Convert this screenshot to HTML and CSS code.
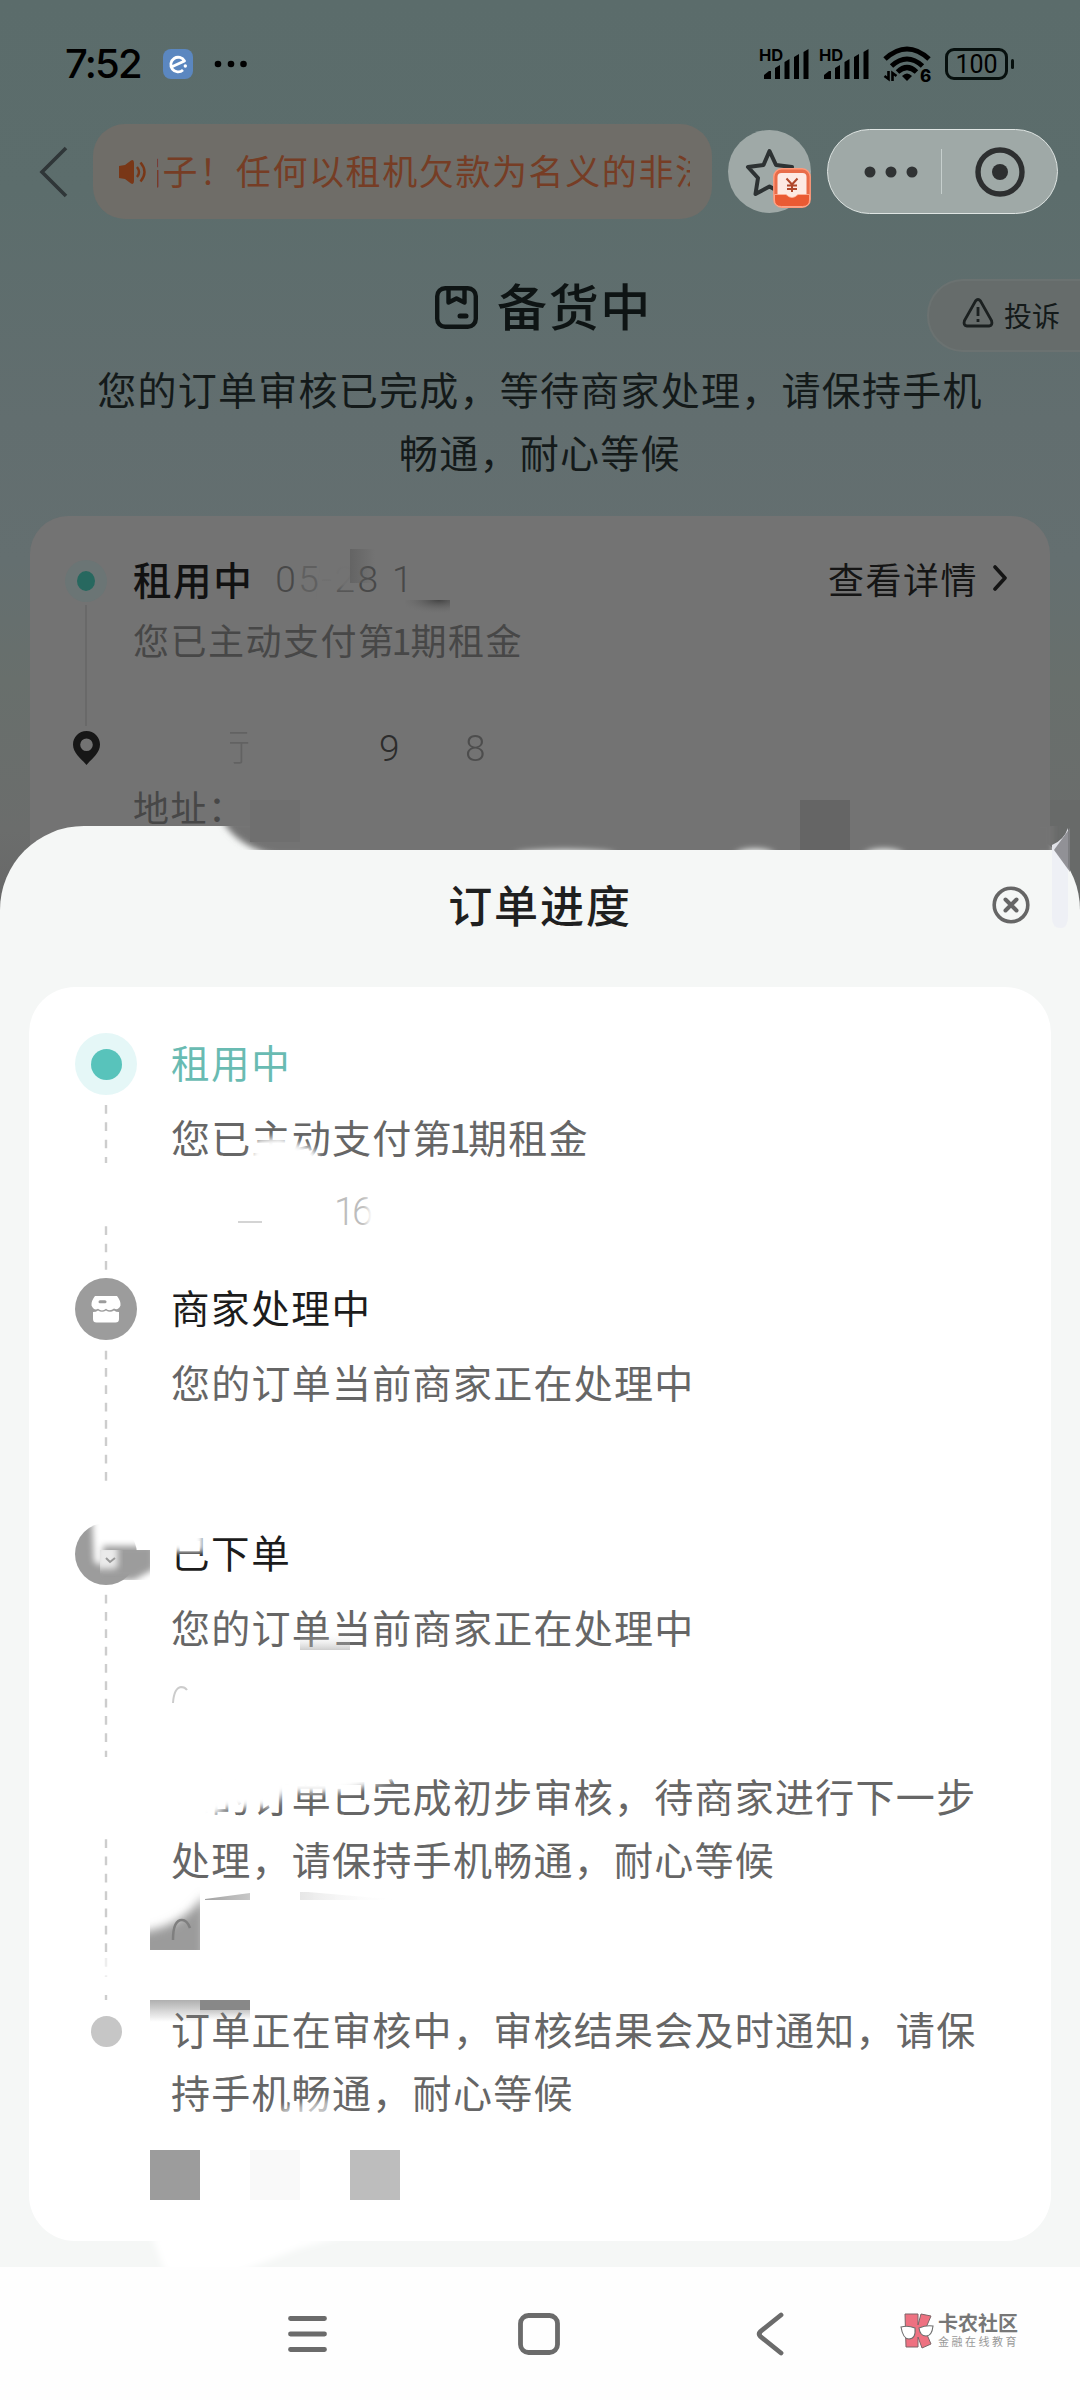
FILE: index.html
```html
<!DOCTYPE html>
<html lang="zh-CN">
<head>
<meta charset="utf-8">
<title>订单进度</title>
<link rel="stylesheet" href="styles.css">
</head>
<body>
<div class="screen">
  <header class="status">
    <span class="clock">7:52</span>
    <svg class="app-badge" width="30" height="30" viewBox="0 0 30 30"><rect width="30" height="30" rx="8" fill="#5b87c0"/><path d="M9.500 17.500 21.500 12A7.300 7.300 0 1 0 20 21" fill="none" stroke="#fff" stroke-width="2.800" stroke-linejoin="round"/><circle cx="22.300" cy="17" r="1.700" fill="#fff"/></svg>
    <svg width="34" height="10" viewBox="0 0 34 10"><circle cx="4" cy="5" r="3.300"/><circle cx="17" cy="5" r="3.300"/><circle cx="29.500" cy="5" r="3.300"/></svg>
    <div class="status-icons">
      <div class="signal"><span>HD</span><svg width="52" height="32" viewBox="0 0 52 32"><path d="M5 31v-4l5-4h2v8zM16 31V20l5-3v14zM25.500 31V14l5-3v20zM35 31V9l5-3v25zM44.500 31V4l5-3v30z"/></svg></div>
      <div class="signal"><span>HD</span><svg width="52" height="32" viewBox="0 0 52 32"><path d="M5 31v-4l5-4h2v8zM16 31V20l5-3v14zM25.500 31V14l5-3v20zM35 31V9l5-3v25zM44.500 31V4l5-3v30z"/></svg></div>
      <svg class="wifi" width="50" height="38" viewBox="0 0 50 38"><g fill="none" stroke="#000" stroke-width="5"><path d="M3 14Q25-6 47 14"/><path d="M9.500 21Q25 7 40.500 21"/><path d="M15.500 27Q25 18 34.500 27"/></g><path d="M20 31q5-5 10 0l-5 5z"/><path d="M6.500 26v8l-4-3M10.500 36v-8l4 3" fill="none" stroke="#000" stroke-width="2.600"/><text x="38" y="36.500" class="wifi-gen">6</text></svg>
      <div class="battery">100</div><i class="battery-nub"></i>
    </div>
  </header>

  <div class="navbar">
    <svg class="back" width="30" height="52" viewBox="0 0 30 52"><path d="M27 2 3 26 27 50" fill="none" stroke="#2f3638" stroke-width="3.600"/></svg>
    <div class="notice">
      <svg width="30" height="26" viewBox="0 0 30 26"><path d="M1 7 7 6 13 1.500Q16 0 16 4V22Q16 26 13 24.500L7 20 1 19z" fill="#793717"/><path d="M19 8q4 5 0 10M22.500 3.500q8 9.500 0 19" fill="none" stroke="#793717" stroke-width="2.400"/></svg>
      <div class="marquee"><span>骗子！任何以租机欠款为名义的非法</span></div>
    </div>
    <div class="fav">
      <svg width="50" height="50" viewBox="0 0 50 50"><path d="M24.500 4 31 18 47 20 35.500 31 38 47 24.500 39.500 10.500 47 13 31 3 20 18.500 18z" fill="none" stroke="#2d3233" stroke-width="4" stroke-linejoin="round"/></svg>
      <svg class="coupon" width="38" height="40" viewBox="0 0 38 40"><rect x=".8" y=".8" width="36.400" height="38.400" rx="8" fill="#e96c49" stroke="#ff9a7b" stroke-width="1.400"/><rect x="4.500" y="5" width="29" height="25" rx="4" fill="#fde9e3"/><path d="M1.500 26.500H13q6 6 12 0h11.500V32q0 6.500-7 6.500H8.500q-7 0-7-6.500z" fill="#ea5a33" stroke="#ffb49c" stroke-width=".8"/><path d="M13.500 10.500 19 16.500 24.500 10.500M19 16.500V24M14 17.500H24M14 21H24" fill="none" stroke="#b0472b" stroke-width="2"/></svg>
    </div>
    <div class="capsule">
      <svg width="54" height="12" viewBox="0 0 54 12"><g fill="#303334"><circle cx="6" cy="6" r="5.500"/><circle cx="27" cy="6" r="5.500"/><circle cx="48" cy="6" r="5.500"/></g></svg>
      <i></i>
      <svg width="50" height="50" viewBox="0 0 50 50"><circle cx="25" cy="25" r="22" fill="none" stroke="#2d2f30" stroke-width="5.400"/><circle cx="25" cy="25" r="8" fill="#2d2f30"/></svg>
    </div>
  </div>

  <section class="hero">
    <div class="hero-title">
      <svg width="43" height="43" viewBox="0 0 43 43"><g fill="none" stroke="#0e1414" stroke-width="4.400"><rect x="2.200" y="2.200" width="38.600" height="38.600" rx="8"/><path d="M13.500 3V16.500L21.500 12.500 29.500 16.500V3" stroke-linejoin="round"/><path d="M25 30h6" stroke-width="5" stroke-linecap="round"/></g></svg>
      <h1>备货中</h1>
    </div>
    <p>您的订单审核已完成，等待商家处理，请保持手机<br>畅通，耐心等候</p>
    <div class="complain"><svg width="32" height="30" viewBox="0 0 32 30"><path d="M13.500 3Q16 0 18.500 3L29.500 22.500Q31 27.500 27 28H5Q1 27.500 2.500 22.500z" fill="none" stroke="#1b2020" stroke-width="2.800"/><path d="M16 9v9M16 21v3" stroke="#1b2020" stroke-width="2.800"/></svg><span>投诉</span></div>
  </section>

  <section class="summary">
    <div class="summary-rail">
      <span class="halo small"><i></i></span>
      <span class="rail-line"></span>
      <svg width="27" height="34" viewBox="0 0 27 34"><path d="M13.500 0C6 0 0 6 0 13.500 0 22 8.500 28 13.500 34 18.500 28 27 22 27 13.500 27 6 21 0 13.500 0zM13.500 7.500a6.300 6.300 0 1 1 0 12.600 6.300 6.300 0 0 1 0-12.600z" fill="#171717" fill-rule="evenodd"/></svg>
    </div>
    <div class="summary-body">
      <div class="summary-head"><strong>租用中</strong><span class="date">05-28 1</span><span class="detail">查看详情</span><svg width="16" height="26" viewBox="0 0 16 26"><path d="M3 2 13 13 3 24" fill="none" stroke="#151515" stroke-width="3.600" stroke-linecap="round" stroke-linejoin="round"/></svg></div>
      <div class="summary-note">您已主动支付第<b class="num">1</b>期租金</div>
      <div class="summary-user"><span>行</span><span>9</span><span>8</span></div>
      <div class="summary-address">地址：</div>
    </div>
  </section>

  <svg class="smudge" width="1080" height="420" viewBox="0 500 1080 420">
    <defs>
      <linearGradient id="g1" x1="0" x2="1"><stop offset="0" stop-color="#606060"/><stop offset="1" stop-color="#606060" stop-opacity="0"/></linearGradient>
      <linearGradient id="g2" x1="0" x2="0" y1="0" y2="1"><stop offset="0" stop-color="#737373"/><stop offset=".65" stop-color="#737373" stop-opacity=".9"/><stop offset="1" stop-color="#737373" stop-opacity="0"/></linearGradient>
      <radialGradient id="g3" cx=".75" cy="0" r=".9"><stop offset="0" stop-color="#444"/><stop offset="1" stop-color="#737373" stop-opacity="0"/></radialGradient>
    </defs>
    <path d="M299 565h21l-4 34h-17z" fill="#737373" opacity=".55"/>
    <rect x="320" y="562" width="38" height="34" fill="url(#g2)"/>
    <rect x="350" y="549" width="25" height="34" fill="url(#g1)" opacity=".8"/>
    <rect x="405" y="600" width="45" height="16" fill="url(#g3)"/>
    <rect x="250" y="800" width="50" height="50" fill="#6f6f6f"/>
    <rect x="800" y="800" width="50" height="50" fill="#656565"/>
    <rect x="1050" y="800" width="30" height="106" fill="#686a69"/>
  </svg>

  <main class="sheet">
    <div class="sheet-head">
      <h2>订单进度</h2>
      <svg width="38" height="38" viewBox="0 0 38 38"><g fill="none" stroke="#666" stroke-width="3.600"><circle cx="19" cy="19" r="16.800"/><path d="M13.500 13.500 24.500 24.500M24.500 13.500 13.500 24.500" stroke-width="4" stroke-linecap="round"/></g></svg>
    </div>
    <div class="card">
      <div class="step">
        <div class="rail"><span class="halo"><i></i></span><svg class="dash" width="4" height="182" viewBox="0 0 4 182"><path d="M2 10V68" /><path d="M2 131.300V182"/></svg></div>
        <div class="text"><h3 class="active">租用中</h3><p>您已主动支付第<b class="num">1</b>期租金</p><time>16</time></div>
      </div>
      <div class="step">
        <div class="rail"><span class="node"><svg width="32" height="28" viewBox="0 0 32 28"><path d="M5 1H27Q31 6 30.500 10.500 28 16 24 13.500 20 17 16 13.800 12 17 8 13.800 4 16 1.500 10.500 1 6 5 1z" fill="#fff"/><path d="M3 17q3 0 5-1.500 4 2.500 8 0 4 2.500 8 0 2 1.500 5 1.500v7q0 3.500-3.500 3.500h-19Q3 27.500 3 24z" fill="#fff"/><path d="M10 6.800h5" stroke="#9c9c9c" stroke-width="3" stroke-linecap="round"/></svg></span><svg class="dash" width="4" height="160" viewBox="0 0 4 160"><path d="M2 10.700V142"/></svg></div>
        <div class="text"><h3>商家处理中</h3><p>您的订单当前商家正在处理中</p></div>
      </div>
      <div class="step tall">
        <div class="rail"><span class="node"></span><svg class="dash" width="4" height="415" viewBox="0 0 4 415"><path d="M2 9.700V172"/><path d="M2 254.200V368"/><path d="M2 373V392" opacity=".35"/><path d="M2 410v5"/></svg></div>
        <div class="text"><h3>已下单</h3><p>您的订单当前商家正在处理中</p><p class="review">您的订单已完成初步审核，待商家进行下一步<br>处理，请保持手机畅通，耐心等候</p></div>
      </div>
      <div class="step last">
        <div class="rail"><span class="dot"></span></div>
        <div class="text"><p>订单正在审核中，审核结果会及时通知，请保<br>持手机畅通，耐心等候</p></div>
      </div>
    </div>
  </main>

  <svg class="smudge over" width="1080" height="1480" viewBox="0 800 1080 1480">
    <defs>
      <linearGradient id="v1" x1="0" x2="0" y1="0" y2="1"><stop offset="0" stop-color="#fff" stop-opacity="0"/><stop offset="1" stop-color="#9c9c9c"/></linearGradient>
      <linearGradient id="v2" x1="0" x2="0" y1="0" y2="1"><stop offset="0" stop-color="#8c8c8c"/><stop offset="1" stop-color="#8c8c8c" stop-opacity="0"/></linearGradient>
      <linearGradient id="v4" x1="0" x2="1"><stop offset="0" stop-color="#8a8a8a"/><stop offset="1" stop-color="#fff" stop-opacity="0"/></linearGradient>
      <filter id="b2" x="-20%" y="-50%" width="140%" height="200%"><feGaussianBlur stdDeviation="3"/></filter>
      <filter id="b6" x="-20%" y="-50%" width="140%" height="200%"><feGaussianBlur stdDeviation="5"/></filter>
      <clipPath id="top"><rect x="0" y="826" width="1080" height="24"/></clipPath>
      <clipPath id="left"><rect x="150" y="1880" width="50" height="70"/></clipPath>
      <clipPath id="badge"><rect x="100" y="1550" width="50" height="30"/></clipPath>
    </defs>
    <g clip-path="url(#top)"><path d="M222 820Q236 846 276 856H1054V820z" fill="#737373" filter="url(#b2)"/><rect x="300" y="826" width="740" height="24" fill="#737373"/><rect x="250" y="826" width="50" height="16" fill="#6f6f6f"/><rect x="800" y="826" width="50" height="24" fill="#656565"/><g fill="#f5f7f6" filter="url(#b2)"><ellipse cx="565" cy="855" rx="50" ry="5"/><ellipse cx="755" cy="856" rx="20" ry="7"/><ellipse cx="884" cy="856" rx="20" ry="7"/></g></g>
    <path d="M1052 845Q1064 840 1068 828V915Q1068 928 1061 928 1052 928 1052 918z" fill="#edeef5" opacity=".9"/>
    <path d="M1054 850 1070 828V872z" fill="#828287" opacity=".85"/>
    <path d="M238 1222h24" stroke="#d4d4d4" stroke-width="2"/>
    <g fill="#fff" filter="url(#b2)">
      <path d="M250 1158 256 1140 280 1137 315 1150 322 1166H245z"/>
      <path d="M369 1185h14v50h-17z"/>
      <path d="M92 1515 156 1510V1546H103V1566L94 1562z"/>
      <path d="M165 1522H204V1552H165z"/>
      <path d="M160 1772H430L340 1792 285 1792 275 1806 225 1808 200 1825H160z"/>
      <path d="M280 2108 335 2098 326 2124H275z" opacity=".6"/>
    </g>
    <g clip-path="url(#badge)"><path d="M90 1545h64v24L134 1580H96z" fill="#9c9c9c" filter="url(#b2)"/><path d="M96 1545h22v20q-1 4-5 4H96z" fill="#eaeaea" filter="url(#b2)"/></g>
    <path d="M106 1558l4 4 5-4" fill="none" stroke="#999" stroke-width="2"/>
    <rect x="300" y="1632" width="50" height="18" fill="url(#v1)" opacity=".5"/>
    <path d="M173 1703q1-15 8-16 4 0 6 3" fill="none" stroke="#ccc" stroke-width="2"/>
    <path d="M205 1899 250 1893v7h-45zM300 1892h8l92 8H300z" fill="url(#v4)" opacity=".8"/>
    <g clip-path="url(#left)"><path d="M140 1960V1932Q180 1928 205 1895V1960z" fill="#9b9b9b" filter="url(#b6)"/><path d="M173 1940q0-20 9-20 5 0 8 8" fill="none" stroke="#7f7f7f" stroke-width="2.500"/></g>
    <rect x="150" y="2000" width="50" height="22" fill="url(#v2)" opacity=".7"/>
    <rect x="200" y="2000" width="50" height="20" fill="url(#v2)"/><rect x="200" y="2000" width="50" height="10" fill="#888"/>
    <rect x="150" y="2150" width="50" height="50" fill="#9c9c9c"/><rect x="250" y="2150" width="50" height="50" fill="#f9f9f9"/><rect x="350" y="2150" width="50" height="50" fill="#bdbdbd"/>
    <path d="M152 2236H345L300 2248 240 2272H165z" fill="#fff" filter="url(#b2)"/>
  </svg>

  <footer class="sysnav">
    <svg width="39" height="38" viewBox="0 0 39 38"><path d="M2.500 3.500h34M2.500 19h34M2.500 34.500h34" stroke="#6b6b6b" stroke-width="4.800" stroke-linecap="round"/></svg>
    <svg width="42" height="42" viewBox="0 0 42 42"><rect x="2.500" y="2.500" width="37" height="37" rx="8" fill="none" stroke="#6b6b6b" stroke-width="4.800"/></svg>
    <svg width="28" height="44" viewBox="0 0 28 44"><path d="M25 3 4.500 19.500Q2 22 4.500 24.500L25 41" fill="none" stroke="#6b6b6b" stroke-width="4.800" stroke-linecap="round"/></svg>
    <div class="brand">
      <svg width="34" height="36" viewBox="0 0 34 36"><path d="M5 1H18V12L21 1 31 3 25 17 31 31 22 35 18 24V34H6z" fill="#ee7181" stroke="#7c6568" stroke-width="1"/><g fill="#fff" stroke="#6e6e6e" stroke-width="1.100"><path d="M1 14Q8 12 15 15 16 26 9 26 3 26 1 14z"/><path d="M19 15Q26 12 33 13 32 23 26 23 20 23 19 15z"/></g></svg>
      <div><strong>卡农社区</strong><span>金融在线教育</span></div>
    </div>
  </footer>
</div>
</body>
</html>
```
FILE: styles.css
```css
* { box-sizing: border-box; }
body, h1, h2, h3, p { margin: 0; font-weight: 400; }
body { font-family: "Noto Sans CJK SC", sans-serif; }
svg { display: block; flex: none; }

.screen {
  position: relative;
  display: flex;
  flex-direction: column;
  width: 1080px;
  height: 2400px;
  overflow: hidden;
  background: linear-gradient(#5b6c6b 0, #5c6d6c 190px, #626e6f 420px, #646f70 560px, #686f6c 680px, #6b6d6c 830px, #686868 910px);
}

.status { display: flex; align-items: center; height: 128px; padding: 0 66px 0 65px; }
.clock { width: 76px; font: 500 40px/50px Inter, sans-serif; letter-spacing: -1.8px; white-space: nowrap; }
.app-badge { margin: 0 21px 0 22px; }
.status-icons { display: flex; align-items: center; margin-left: auto; }
.signal { position: relative; width: 60px; height: 32px; }
.signal span { position: absolute; left: 0; top: -3px; font: 700 16.5px/20px Inter, sans-serif; }
.wifi { margin-left: 3px; }
.wifi-gen { font: 800 17px Inter, sans-serif; }
.battery { width: 63px; height: 32px; margin-left: 13px; border: 3.5px solid #07100e; border-radius: 9px; font: 400 25px/27px Roboto, sans-serif; text-align: center; }
.battery-nub { width: 3px; height: 10px; margin-left: 3px; border-radius: 2px; background: #07100e; }

.navbar { display: flex; align-items: center; height: 95px; margin-top: -4px; padding-left: 39px; }
.back { margin-right: 24px; }
.notice { display: flex; align-items: center; width: 619px; height: 95px; padding-left: 25px; border-radius: 32px; background: #6f6d68; }
.marquee { width: 533px; margin-left: 9px; overflow: hidden; white-space: nowrap; color: #763d25; font-size: 35px; line-height: 54px; letter-spacing: 1.6px; }
.marquee span { display: block; margin: -2px 0 2px -31px; }
.fav { position: relative; display: flex; justify-content: center; align-items: center; width: 83px; height: 83px; margin-left: 16px; border-radius: 50%; background: #9fa9a7; }
.coupon { position: absolute; left: 45px; top: 38px; }
.capsule { display: flex; align-items: center; width: 231px; height: 85px; margin-left: 16px; padding-left: 36px; border: 1.5px solid #dfe5e3; border-radius: 44px; background: #9fa9a7; }
.capsule i { width: 1px; height: 45px; margin: 0 33px 0 23px; background: #c6cfcd; }

.hero { position: relative; height: 297px; padding-top: 56px; color: #141a1a; }
.hero-title { display: flex; justify-content: center; align-items: center; gap: 19px; height: 64px; padding-left: 7px; }
.hero-title h1 { color: #0e1414; font-size: 50px; line-height: 64px; letter-spacing: 1.7px; font-weight: 500; margin-top: -6px; }
.hero p { margin-top: 18px; text-align: center; font-size: 39px; line-height: 63px; letter-spacing: 1.25px; }
.complain { position: absolute; right: 0; top: 60px; display: flex; align-items: center; gap: 10px; width: 153px; height: 73px; padding-left: 33px; border: 2px solid #6b7271; border-right: 0; border-radius: 36px 0 0 36px; background: #666c6b; font-size: 28px; }
.complain span { line-height: 40px; margin-top: -2px; }
.complain svg { margin-top: -6px; }

.summary { display: flex; height: 420px; margin: 0 30px 0; border-radius: 38px; background: #737373; }
.summary-rail { display: flex; flex-direction: column; align-items: center; width: 112px; padding-top: 44px; }
.halo { display: grid; place-items: center; width: 62px; height: 62px; border-radius: 50%; background: #e5f7f7; }
.halo i { width: 31px; height: 31px; border-radius: 50%; background: #58c3bb; }
.halo.small { width: 42px; height: 42px; background: #6b7575; }
.halo.small i { width: 18px; height: 20px; background: #27685f; }
.rail-line { width: 2px; height: 121px; margin: 3px 0 5px; background: #696969; }
.summary-body { flex: 1; padding: 35px 42px 0 0; margin-left: -9px; }
.summary-head { display: flex; align-items: center; height: 54px; }
.summary-head strong { font-size: 38.5px; line-height: 54px; letter-spacing: 1.6px; font-weight: 500; color: #111; }
.date { width: 160px; margin-left: 22px; color: #484848; font: 300 37px/54px Roboto, sans-serif; white-space: nowrap; padding-top: 4px; letter-spacing: 2.5px; }
.detail { margin-left: auto; margin-right: 14px; color: #151515; font-size: 36px; line-height: 54px; letter-spacing: 1.5px; }
.num { display: inline-block; width: 14px; margin-left: -2px; margin-right: 3px; font-weight: 400; letter-spacing: 0; text-indent: -2px; }
.summary-note { height: 54px; margin-top: 7px; color: #474747; font-size: 36px; line-height: 54px; letter-spacing: 1.5px; }
.summary-user { display: flex; height: 50px; margin-top: 58px; font: 300 37px/50px Roboto, "Noto Sans CJK SC", sans-serif; color: #444; }
.summary-user span:nth-child(1) { width: 38px; margin: 0 138px 0 80px; opacity: .35; clip-path: inset(0 0 0 45%); }
.summary-user span:nth-child(2) { width: 86px; margin-left: -10px; color: #2c2c2c; }
.summary-user span:nth-child(3) { opacity: .8; }
.summary-address { margin-top: 5px; color: #474747; font-size: 36px; line-height: 54px; letter-spacing: 1.5px; }

.smudge { position: absolute; left: 0; top: 500px; pointer-events: none; }
.smudge.over { top: 800px; }

.sheet { position: absolute; left: 0; top: 826px; width: 1080px; height: 1441px; padding: 0 29px; border-radius: 84px 84px 0 0; background: #f5f7f6; }
.sheet-head { display: grid; grid-template-columns: 1fr auto 1fr; align-items: center; height: 161px; padding-right: 21px; }
.sheet-head h2 { grid-column: 2; margin: -6px 0 0 21px; color: #1f2020; font-size: 44px; line-height: 64px; letter-spacing: 1.9px; font-weight: 500; }
.sheet-head svg { justify-self: end; margin-top: -3px; }
.card { height: 1254px; padding: 46px 42px 0 46px; border-radius: 46px; background: #fff; }
.step { display: flex; gap: 34px; height: 245px; }
.step.tall { height: 477px; }
.rail { display: flex; flex-direction: column; align-items: center; width: 62px; }
.node { display: grid; place-items: center; flex: none; width: 62px; height: 62px; border-radius: 50%; background: #9c9c9c; }
.dot { width: 31px; height: 31px; margin-top: 16px; border-radius: 50%; background: #c6c6c6; }
.dash path { fill: none; stroke: #cdcdcd; stroke-width: 2.4; stroke-dasharray: 8.7 8.63; }
.text { color: #666; font-size: 39px; line-height: 63px; letter-spacing: 1.27px; white-space: nowrap; }
.text h3 { margin-top: -3px; color: #1c1c1c; font-size: 38.5px; line-height: 63px; letter-spacing: 1.6px; }
.text h3.active { color: #69bbb2; }
.text p { margin-top: 12px; }
.text p.review { margin-top: 106px; }
.step.last .text p { margin-top: -3px; }
.text time { display: block; margin: 14px 0 0 163px; color: #bdbdbd; font: 300 38px/60px Roboto, sans-serif; letter-spacing: -3px; }

.sysnav { display: flex; align-items: center; position: absolute; left: 0; right: 0; bottom: 0; height: 133px; padding-left: 288px; background: #fefefe; }
.sysnav > svg:nth-child(2) { margin-left: 191px; }
.sysnav > svg:nth-child(3) { margin-left: 196px; }
.brand { display: flex; align-items: center; gap: 4px; margin-left: 116px; margin-top: -6px; }
.brand div { display: flex; flex-direction: column; }
.brand strong { color: #777; font-size: 20px; line-height: 20px; font-weight: 700; }
.brand span { margin-top: 2px; color: #999; font-size: 11px; line-height: 13px; letter-spacing: 2.5px; }
```
